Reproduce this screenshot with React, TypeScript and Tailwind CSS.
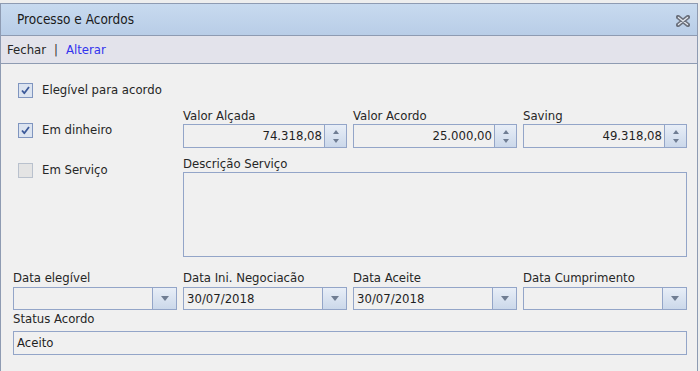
import React from "react";

const FONT = { fontFamily: '"DejaVu Sans Condensed", "DejaVu Sans", Tahoma, sans-serif' };

function CheckBox({ checked, label }: { checked: boolean; label: string }) {
  return (
    <div className="flex h-[14px] items-center">
      {checked ? (
        <div className="flex h-[15px] w-[15px] shrink-0 items-center justify-center border border-solid border-[#7f95bf] bg-[#dce4f0]">
          <svg width="9" height="9" viewBox="0 0 9 9">
            <path d="M1 4.5 L3.3 7.2 L8 1" fill="none" stroke="#3c5a9a" strokeWidth="1.8" strokeLinejoin="round" />
          </svg>
        </div>
      ) : (
        <div className="h-[15px] w-[15px] shrink-0 border border-solid border-[#b9c1cd] bg-[#e4e4e4]" />
      )}
      <span className="ml-[9px] text-[13px] leading-[14px] text-[#262626]">{label}</span>
    </div>
  );
}

function Label({ text }: { text: string }) {
  return <div className="h-[14px] text-[13px] leading-[14px] text-[#262626] whitespace-nowrap">{text}</div>;
}

function Spinner({ value }: { value: string }) {
  return (
    <div className="flex h-[24px]">
      <div className="flex flex-1 items-center justify-end border border-[#93a5c8] bg-[#f0f0f0] pr-[2px] text-[13px] text-[#1f1f1f]">
        {value}
      </div>
      <div className="flex w-[22px] flex-col items-center justify-center gap-[5px] border border-l-0 border-[#93a5c8] bg-gradient-to-b from-[#e8eef7] to-[#cbd8ea]">
        <svg width="6" height="4" viewBox="0 0 6 4">
          <path d="M0 4 L3 0 L6 4 Z" fill="#6f7d93" />
        </svg>
        <svg width="6" height="4" viewBox="0 0 6 4">
          <path d="M0 0 L3 4 L6 0 Z" fill="#6f7d93" />
        </svg>
      </div>
    </div>
  );
}

function DateField({ value }: { value?: string }) {
  return (
    <div className="flex h-[23px]">
      <div className="flex flex-1 items-center border border-[#93a5c8] bg-[#f0f0f0] pl-[3px] text-[13px] text-[#1f1f1f]">
        {value}
      </div>
      <div className="flex w-[24px] items-center justify-center border border-l-0 border-[#93a5c8] bg-gradient-to-b from-[#e8eef7] to-[#cbd8ea]">
        <svg width="8" height="5" viewBox="0 0 8 5">
          <path d="M0 0 L4 5 L8 0 Z" fill="#6f7d93" />
        </svg>
      </div>
    </div>
  );
}

export default function App() {
  return (
    <div className="h-[371px] w-[700px] overflow-hidden bg-[#eeeeee] pt-[3px]" style={FONT}>
      <div className="h-[380px] w-[698px] border border-[#8e9bb2] bg-[#f0f0f0]">
        {/* Title bar */}
        <div className="flex h-[32px] items-center justify-between border-b border-[#8e9bb2] bg-gradient-to-b from-[#c8daef] to-[#b8cde7] pl-[16px] pr-[6px]">
          <span className="text-[13.5px] text-[#1a1a1a]">Processo e Acordos</span>
          <svg width="14" height="12" viewBox="0 0 14 12" className="mr-[1px] mt-[2px]">
            <path d="M2 2 L12 10 M12 2 L2 10" stroke="#6b717d" strokeWidth="4.2" strokeLinecap="round" />
            <path d="M2.5 2.5 L11.5 9.5 M11.5 2.5 L2.5 9.5" stroke="#e4e8ef" strokeWidth="1.3" strokeLinecap="round" />
          </svg>
        </div>
        {/* Toolbar */}
        <div className="flex h-[28px] items-center border-b border-[#8e9bb2] bg-[#e3e3eb] pl-[6px] text-[13px]">
          <span className="text-[#262626]">Fechar</span>
          <span className="mx-[8px] text-[#333]">|</span>
          <span className="text-[#3333ee]">Alterar</span>
        </div>
        {/* Content */}
        <div className="pl-[12px] pr-[10px]">
          <div className="flex">
            <div className="flex w-[170px] flex-col gap-[26px] pl-[5px] pt-[19px]">
              <CheckBox checked label="Elegível para acordo" />
              <CheckBox checked label="Em dinheiro" />
              <CheckBox checked={false} label="Em Serviço" />
            </div>
            <div className="flex-1 pt-[45px]">
              <div className="grid grid-cols-3 gap-x-[6px]">
                <div>
                  <div className="mb-[1px]"><Label text="Valor Alçada" /></div>
                  <Spinner value="74.318,08" />
                </div>
                <div>
                  <div className="mb-[1px]"><Label text="Valor Acordo" /></div>
                  <Spinner value="25.000,00" />
                </div>
                <div>
                  <div className="mb-[1px]"><Label text="Saving" /></div>
                  <Spinner value="49.318,08" />
                </div>
              </div>
              <div className="mt-[9px] mb-[1px]"><Label text="Descrição Serviço" /></div>
              <div className="h-[85px] border border-[#93a5c8] bg-[#f0f0f0]" />
            </div>
          </div>
          <div className="mt-[14px] grid grid-cols-4 gap-x-[6px]">
            <div>
              <div className="mb-[2px]"><Label text="Data elegível" /></div>
              <DateField />
            </div>
            <div>
              <div className="mb-[2px]"><Label text="Data Ini. Negociacão" /></div>
              <DateField value="30/07/2018" />
            </div>
            <div>
              <div className="mb-[2px]"><Label text="Data Aceite" /></div>
              <DateField value="30/07/2018" />
            </div>
            <div>
              <div className="mb-[2px]"><Label text="Data Cumprimento" /></div>
              <DateField />
            </div>
          </div>
          <div className="mt-[2px] mb-[5px]"><Label text="Status Acordo" /></div>
          <div className="flex h-[24px] items-center border border-[#93a5c8] bg-[#f0f0f0] pl-[3px] text-[13px] text-[#1f1f1f]">
            Aceito
          </div>
        </div>
      </div>
    </div>
  );
}
